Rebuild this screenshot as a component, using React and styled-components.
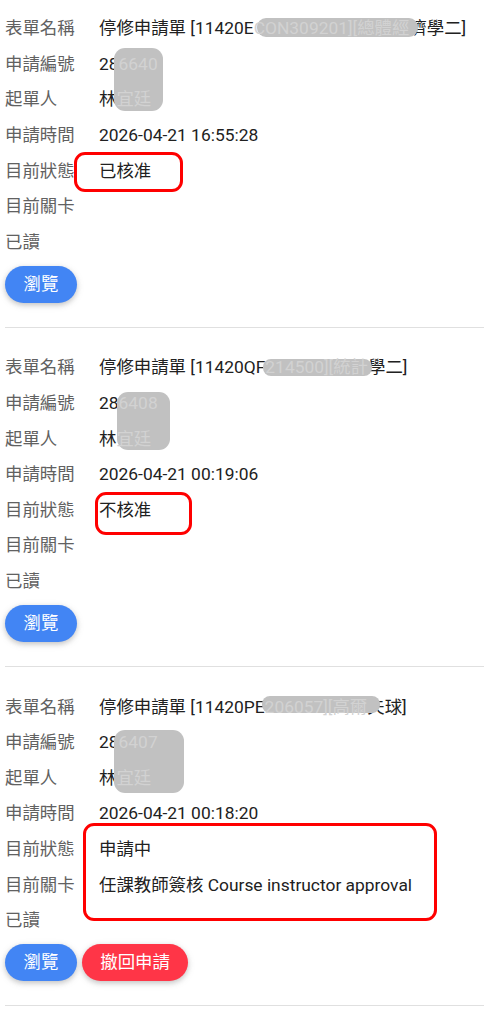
import React from "react";
import styled, { createGlobalStyle } from "styled-components";

const Global = createGlobalStyle`
  html, body { margin: 0; padding: 0; background: #ffffff; }
  body {
    font-family: Roboto, "Noto Sans CJK TC", "Noto Sans", sans-serif;
    -webkit-font-smoothing: antialiased;
  }
`;

const List = styled.div`
  display: flex;
  flex-direction: column;
  gap: 22px;
  padding: 11px 0 0 5px;
`;

const Card = styled.section`
  position: relative;
  padding: 0 0 24px 0;
  border-bottom: 1px solid #e0e0e0;
`;

const Row = styled.div`
  display: flex;
  align-items: center;
  height: 35.6px;
  font-size: 17.4px;
  line-height: 25px;
`;

const Label = styled.div`
  width: 94px;
  flex: none;
  color: #616161;
`;

const Value = styled.div`
  color: #212121;
  white-space: nowrap;
`;

const Hidden = styled.span`
  position: relative;
  z-index: 2;
  color: #d2d2d2;
`;

const Blob = styled.div`
  position: absolute;
  z-index: 1;
  background: #c1c1c1;
  border-radius: ${(p) => p.$r}px;
`;

const Mark = styled.div`
  position: absolute;
  z-index: 3;
  box-sizing: border-box;
  border: 3px solid #ff0000;
  border-radius: 11px;
`;

const Actions = styled.div`
  display: flex;
  gap: 5px;
  margin-top: 6px;
`;

const Button = styled.button`
  height: 37px;
  padding: 0 18.5px;
  border: none;
  border-radius: 19px;
  background: ${(p) => (p.$danger ? "#ff3547" : "#4285f4")};
  color: #ffffff;
  font-family: Roboto, "Noto Sans CJK TC", sans-serif;
  font-size: 17.4px;
  line-height: 25px;
  box-shadow: 0 2px 5px rgba(0, 0, 0, 0.16), 0 2px 8px rgba(0, 0, 0, 0.1);
  cursor: pointer;
`;

const cards = [
  {
    name: ["停修申請單 [11420E", "CON309201][總體經", "濟學二]"],
    no: ["28", "6640"],
    owner: ["林", "宜廷"],
    time: "2026-04-21 16:55:28",
    status: "已核准",
    stage: "",
    cancel: false,
    blobs: [
      { left: 252, top: 7, w: 161, h: 19, r: 9 },
      { left: 109, top: 37, w: 49, h: 63, r: 11 },
    ],
    mark: { left: 69, top: 141, w: 109, h: 40 },
  },
  {
    name: ["停修申請單 [11420QF", "214500][統計", "學二]"],
    no: ["28", "6408"],
    owner: ["林", "宜廷"],
    time: "2026-04-21 00:19:06",
    status: "不核准",
    stage: "",
    cancel: false,
    blobs: [
      { left: 258, top: 9, w: 109, h: 17, r: 8 },
      { left: 112, top: 42, w: 53, h: 58, r: 11 },
    ],
    mark: { left: 90, top: 142, w: 97, h: 43 },
  },
  {
    name: ["停修申請單 [11420PE", "206057][高爾", "夫球]"],
    no: ["28", "6407"],
    owner: ["林", "宜廷"],
    time: "2026-04-21 00:18:20",
    status: "申請中",
    stage: "任課教師簽核 Course instructor approval",
    cancel: true,
    blobs: [
      { left: 257, top: 7, w: 118, h: 17, r: 8 },
      { left: 109, top: 41, w: 70, h: 63, r: 11 },
    ],
    mark: { left: 78, top: 134, w: 354, h: 98 },
  },
];

function Field({ label, children }) {
  return (
    <Row>
      <Label>{label}</Label>
      <Value>{children}</Value>
    </Row>
  );
}

export default function App() {
  return (
    <>
      <Global />
      <List>
        {cards.map((c, i) => (
          <Card key={i}>
            <Field label="表單名稱">
              {c.name[0]}
              <Hidden>{c.name[1]}</Hidden>
              {c.name[2]}
            </Field>
            <Field label="申請編號">
              {c.no[0]}
              <Hidden>{c.no[1]}</Hidden>
            </Field>
            <Field label="起單人">
              {c.owner[0]}
              <Hidden>{c.owner[1]}</Hidden>
            </Field>
            <Field label="申請時間">{c.time}</Field>
            <Field label="目前狀態">{c.status}</Field>
            <Field label="目前關卡">{c.stage}</Field>
            <Field label="已讀" />
            <Actions>
              <Button type="button">瀏覽</Button>
              {c.cancel && (
                <Button type="button" $danger>
                  撤回申請
                </Button>
              )}
            </Actions>
            {c.blobs.map((b, j) => (
              <Blob
                key={j}
                $r={b.r}
                style={{ left: b.left, top: b.top, width: b.w, height: b.h }}
              />
            ))}
            <Mark
              style={{
                left: c.mark.left,
                top: c.mark.top,
                width: c.mark.w,
                height: c.mark.h,
              }}
            />
          </Card>
        ))}
      </List>
    </>
  );
}
